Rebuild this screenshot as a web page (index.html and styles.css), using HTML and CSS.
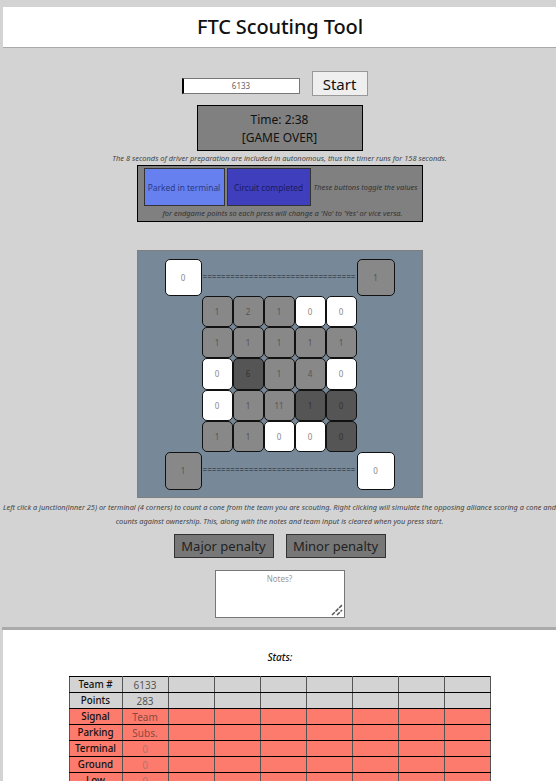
FILE: index.html
```html
<!DOCTYPE html>
<html>

<head>
  <link rel="stylesheet" href="styles.css">
</head>

<body>
  <div class="header">
    <h1>FTC Scouting Tool</h1>
  </div>

  <div class="content">
    <div class="start-row">
      <input class="team-input" type="text" value="6133">
      <button class="btn-start">Start</button>
    </div>

    <div class="timer">
      <div>Time: 2:38</div>
      <div>[GAME OVER]</div>
    </div>

    <p class="note">The 8 seconds of driver preparation are included in autonomous, thus the timer runs for 158 seconds.</p>

    <div class="toggles">
      <div class="toggle-row">
        <button class="btn-toggle parked">Parked in terminal</button>
        <button class="btn-toggle circuit">Circuit completed</button>
        <span class="note">These buttons toggle the values</span>
      </div>
      <p class="note">for endgame points so each press will change a 'No' to 'Yes' or vice versa.</p>
    </div>

    <div class="board">
      <div class="cell terminal white">0</div>
      <div class="wire">=================================</div>
      <div class="cell terminal gray">1</div>

      <div class="cell gray first">1</div>
      <div class="cell gray">2</div>
      <div class="cell gray">1</div>
      <div class="cell white">0</div>
      <div class="cell white">0</div>

      <div class="cell gray first">1</div>
      <div class="cell gray">1</div>
      <div class="cell gray">1</div>
      <div class="cell gray">1</div>
      <div class="cell gray">1</div>

      <div class="cell white first">0</div>
      <div class="cell dark">6</div>
      <div class="cell gray">1</div>
      <div class="cell gray">4</div>
      <div class="cell white">0</div>

      <div class="cell white first">0</div>
      <div class="cell gray">1</div>
      <div class="cell gray">11</div>
      <div class="cell dark">1</div>
      <div class="cell dark">0</div>

      <div class="cell gray first">1</div>
      <div class="cell gray">1</div>
      <div class="cell white">0</div>
      <div class="cell white">0</div>
      <div class="cell dark">0</div>

      <div class="cell terminal gray bottom-left">1</div>
      <div class="wire">=================================</div>
      <div class="cell terminal white">0</div>
    </div>

    <p class="note help">Left click a junction(inner 25) or terminal (4 corners) to count a cone from the team you are scouting. Right clicking will simulate the opposing alliance scoring a cone and counts against ownership. This, along with the notes and team input is cleared when you press start.</p>

    <div class="penalties">
      <button class="btn-penalty">Major penalty</button>
      <button class="btn-penalty">Minor penalty</button>
    </div>

    <div class="notes-wrap">
      <textarea class="notes" placeholder="Notes?"></textarea>
      <svg class="grip" width="12" height="12" viewBox="0 0 12 12">
        <path d="M1 11L11 1M6 11L11 6" stroke="#555" stroke-width="1.5" stroke-dasharray="4 1" fill="none"/>
      </svg>
    </div>
  </div>

  <div class="stats">
    <p class="stats-title">Stats:</p>
    <table>
      <tr class="info"><th>Team #</th><td class="val">6133</td><td></td><td></td><td></td><td></td><td></td><td></td><td></td></tr>
      <tr class="info"><th>Points</th><td class="val">283</td><td></td><td></td><td></td><td></td><td></td><td></td><td></td></tr>
      <tr><th>Signal</th><td class="val">Team</td><td></td><td></td><td></td><td></td><td></td><td></td><td></td></tr>
      <tr><th>Parking</th><td class="val">Subs.</td><td></td><td></td><td></td><td></td><td></td><td></td><td></td></tr>
      <tr><th>Terminal</th><td class="zero">0</td><td></td><td></td><td></td><td></td><td></td><td></td><td></td></tr>
      <tr><th>Ground</th><td class="zero">0</td><td></td><td></td><td></td><td></td><td></td><td></td><td></td></tr>
      <tr><th>Low</th><td class="zero">0</td><td></td><td></td><td></td><td></td><td></td><td></td><td></td></tr>
    </table>
  </div>
</body>

</html>
```

FILE: styles.css
```css
:root {
  --page: #d3d3d3;
  --gray: #808080;
  --board: #778899;
  --salmon: #fd7b6d;
}

* {
  box-sizing: border-box;
  font-family: 'Noto Sans', sans-serif;
}

html {
  overflow: hidden;
  height: 781px;
}

body {
  width: 556px;
  margin: 0 0 0 1.5px;
  padding-top: 7px;
  background-color: var(--page);
  color: #111;
}

.header {
  height: 41px;
  margin-left: 1px;
  background-color: white;
  border-bottom: 1px solid #aaa;
  text-align: center;
}

.header h1 {
  margin: 0;
  font-size: 20px;
  font-weight: 500;
  line-height: 40px;
  letter-spacing: -0.1px;
}

.content {
  display: flex;
  flex-direction: column;
  align-items: center;
  height: 582px;
  border-bottom: 3px solid #aaa;
}

.start-row {
  display: flex;
  align-items: center;
  margin: 23px 10px 0 0;
  gap: 12px;
}

.team-input {
  width: 118px;
  height: 16px;
  margin-top: 4px;
  padding: 0;
  background-color: white;
  border: 1px solid #777;
  border-left: 2px solid black;
  color: #666;
  font-size: 8px;
  text-align: center;
}

.btn-start {
  width: 56px;
  height: 25px;
  padding: 0;
  background-color: #efefef;
  border: 1px solid #999;
  color: #111;
  font-size: 15px;
}

.timer {
  width: 166px;
  height: 46px;
  margin-top: 9px;
  padding-top: 5px;
  background-color: var(--gray);
  border: 1px solid black;
  font-size: 12px;
  line-height: 18px;
  text-align: center;
}

.note {
  margin: 0;
  color: #444;
  font-size: 7.45px;
  font-style: italic;
  line-height: 14px;
}

.content > .note {
  height: 14px;
}

.toggles {
  width: 286px;
  height: 57px;
  padding: 2px 0 0 6px;
  background-color: var(--gray);
  border: 1px solid black;
  text-align: center;
}

.toggles .note {
  color: #333;
}

.toggle-row {
  display: flex;
  align-items: center;
  gap: 2px;
}

.toggle-row .note {
  margin-left: 1px;
  white-space: nowrap;
}

.btn-toggle {
  height: 38px;
  padding: 0;
  border: 1px solid #333;
  font-size: 8.4px;
}

.parked {
  width: 81px;
  background-color: #6680f0;
  color: #2b3a80;
}

.circuit {
  width: 84px;
  background-color: #3f3fbd;
  color: #1a1a60;
}

.board {
  display: grid;
  grid-template-columns: 37px repeat(5, 31px) 38px;
  grid-template-rows: 37px repeat(5, 31.2px) 38px;
  width: 286px;
  height: 248px;
  margin-top: 28px;
  padding: 8px 0 0 27px;
  background-color: var(--board);
  border: 1px solid var(--gray);
}

.cell {
  display: flex;
  align-items: center;
  justify-content: center;
  border: 1px solid #111;
  border-radius: 5px;
  color: #555;
  font-size: 8px;
}

.first {
  grid-column: 2;
}

.bottom-left {
  grid-column: 1;
}

.white {
  background-color: white;
  color: #888;
}

.gray {
  background-color: #888;
}

.dark {
  background-color: #555;
  color: #333;
}

.wire {
  grid-column: 2 / span 5;
  color: #222;
  font-size: 8px;
  letter-spacing: 0.06px;
  line-height: 36px;
  white-space: nowrap;
  text-align: center;
}

.help {
  flex-shrink: 0;
  width: 560px;
  margin-top: 2px;
  font-size: 7.38px;
  text-align: center;
}

.content > .help {
  height: auto;
}

.penalties {
  display: flex;
  gap: 12px;
  margin-top: 6px;
}

.btn-penalty {
  width: 100px;
  height: 24px;
  padding: 0;
  background-color: #777;
  border: 1px solid #333;
  color: #222;
  font-size: 13px;
}

.notes-wrap {
  position: relative;
  display: flex;
  margin-top: 12px;
}

.notes {
  width: 130px;
  height: 48px;
  padding: 2px 1px;
  background-color: white;
  border: 1px solid #777;
  font-size: 8px;
  text-align: center;
  resize: none;
}

.notes::placeholder {
  color: #999;
}

.grip {
  position: absolute;
  right: 2px;
  bottom: 2px;
}

.stats {
  height: 200px;
  margin-left: 1px;
  background-color: white;
}

.stats-title {
  margin: 0;
  padding-top: 20px;
  font-size: 10px;
  font-style: italic;
  font-weight: 500;
  line-height: 14px;
  text-align: center;
}

table {
  width: 422px;
  margin: 12px 0 0 66px;
  border-collapse: collapse;
  table-layout: fixed;
  background-color: var(--salmon);
  font-size: 10px;
}

th, td {
  height: 16px;
  padding: 1px 0 0;
  border: 1px solid black;
  border-left-color: #555;
  border-right-color: #555;
  line-height: 14px;
  text-align: center;
  font-weight: 400;
}

th {
  width: 53px;
  font-size: 9.8px;
  font-weight: 500;
}

.info {
  background-color: var(--page);
}

.val {
  color: #555;
}

tr:not(.info) .val {
  color: #8a4a42;
}

.zero {
  color: #b0776e;
}
```
